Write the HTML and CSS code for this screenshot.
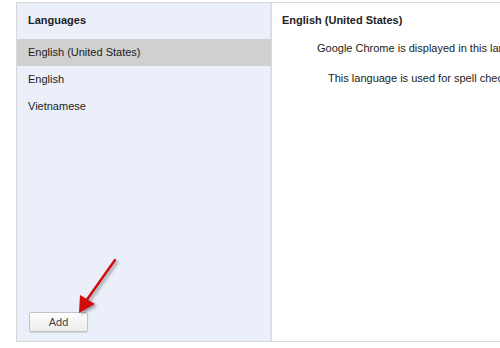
FILE: index.html
```html
<!DOCTYPE html>
<html lang="en">
<head>
  <meta charset="UTF-8" />
  <title>Languages</title>
  <link rel="stylesheet" href="styles.css">
</head>
<body>
  <div class="lang-box">
    <div class="lang-list">
      <div class="list-head">Languages</div>
      <div class="lang-item selected">English (United States)</div>
      <div class="lang-item">English</div>
      <div class="lang-item">Vietnamese</div>
      <div class="list-foot">
        <button type="button" class="add-btn">Add</button>
        <svg class="arrow" width="60" height="70" viewBox="0 0 60 70">
          <defs>
            <filter id="shadow" x="-50%" y="-50%" width="200%" height="200%">
              <feDropShadow dx="2" dy="2" stdDeviation="1.5" flood-color="#000" flood-opacity="0.35"/>
            </filter>
          </defs>
          <g filter="url(#shadow)">
            <line x1="47" y1="4" x2="18" y2="45" stroke="#d00d0d" stroke-width="2.5" stroke-linecap="round"/>
            <polygon points="11,57 12,39 27,48" fill="#d00d0d"/>
          </g>
        </svg>
      </div>
    </div>
    <div class="lang-detail">
      <div class="detail-title">English (United States)</div>
      <div class="detail-line first">Google Chrome is displayed in this language</div>
      <div class="detail-line second">This language is used for spell checking</div>
    </div>
  </div>
</body>
</html>
```

FILE: styles.css
```css
body {
  margin: 0;
  overflow: hidden;
  font-family: "Liberation Sans", Arial, sans-serif;
  font-size: 11px;
  color: #222;
  background: #fff;
}
.lang-box {
  margin: 2px 0 0 16px;
  width: 600px;
  height: 338px;
  border: 1px solid #d9d9d9;
  display: flex;
}
.lang-list {
  width: 254px;
  background: #ebeff9;
  border-right: 1px solid #d6d8e0;
  box-shadow: inset -1px 0 0 #e2e5ef;
  display: flex;
  flex-direction: column;
  position: relative;
}
.list-head {
  height: 36px;
  line-height: 35px;
  padding-left: 11px;
  font-weight: bold;
}
.lang-item {
  height: 27px;
  line-height: 27px;
  padding-left: 11px;
}
.lang-item.selected {
  background: #d0d0d0;
}
.list-foot {
  margin-top: auto;
  padding: 0 0 9px 12px;
}
.add-btn {
  width: 59px;
  height: 20px;
  font-family: inherit;
  font-size: 11px;
  color: #444;
  border: 1px solid #c3c3c3;
  border-radius: 2px;
  background: linear-gradient(#fdfdfd, #ececec);
  box-shadow: 0 1px 1px rgba(0, 0, 0, 0.12);
  padding: 0;
}
.arrow {
  position: absolute;
  left: 51px;
  top: 253px;
}
.lang-detail {
  flex: 1;
  background: #fff;
  white-space: nowrap;
}
.detail-title {
  font-weight: bold;
  padding-left: 10px;
  height: 30px;
  line-height: 34px;
}
.detail-line {
  height: 30px;
  line-height: 30px;
}
.detail-line.first {
  padding-left: 45px;
}
.detail-line.second {
  padding-left: 56px;
}
```
